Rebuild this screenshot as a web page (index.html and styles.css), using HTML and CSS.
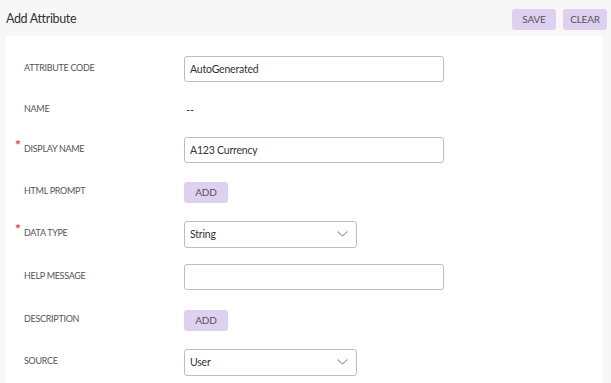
FILE: index.html
```html
<!DOCTYPE html>
<html lang="en">
<head>
  <meta charset="UTF-8" />
  <title>Add Attribute</title>
  <link rel="stylesheet" href="styles.css">
</head>
<body>
  <header class="page-head">
    <div class="page-title">Add Attribute</div>
    <div class="actions">
      <button class="btn">SAVE</button>
      <button class="btn">CLEAR</button>
    </div>
  </header>

  <div class="card">
    <div class="row">
      <label class="label">ATTRIBUTE CODE</label>
      <input class="field" type="text" value="AutoGenerated" />
    </div>
    <div class="row row-short">
      <label class="label">NAME</label>
      <span class="value">--</span>
    </div>
    <div class="row">
      <label class="label required">DISPLAY NAME</label>
      <input class="field" type="text" value="A123 Currency" />
    </div>
    <div class="row">
      <label class="label">HTML PROMPT</label>
      <button class="btn btn-add">ADD</button>
    </div>
    <div class="row">
      <label class="label required">DATA TYPE</label>
      <div class="select">
        <span>String</span>
        <svg class="chevron" width="11" height="6" viewBox="0 0 11 6"><path d="M0.5 0.5 L5.5 5 L10.5 0.5" fill="none" stroke="#a5a5a5" stroke-width="1.1"/></svg>
      </div>
    </div>
    <div class="row row-tall">
      <label class="label">HELP MESSAGE</label>
      <input class="field" type="text" value="" />
    </div>
    <div class="row">
      <label class="label">DESCRIPTION</label>
      <button class="btn btn-add">ADD</button>
    </div>
    <div class="row">
      <label class="label">SOURCE</label>
      <div class="select">
        <span>User</span>
        <svg class="chevron" width="11" height="6" viewBox="0 0 11 6"><path d="M0.5 0.5 L5.5 5 L10.5 0.5" fill="none" stroke="#a5a5a5" stroke-width="1.1"/></svg>
      </div>
    </div>
  </div>
</body>
</html>
```

FILE: styles.css
```css
body {
  margin: 0;
  background: #f7f7f7;
  font-family: 'Lato', 'Noto Sans', sans-serif;
  color: #333;
}

.page-head {
  height: 36px;
  display: flex;
  justify-content: space-between;
  align-items: center;
  padding: 0 4px 0 6px;
}

.page-title {
  font-size: 12.5px;
  letter-spacing: -0.35px;
  color: #333;
}

.actions {
  display: flex;
  gap: 7px;
  padding-top: 2px;
}

.btn {
  background: #ddd0f0;
  color: #555;
  border: none;
  border-radius: 3px;
  font-family: inherit;
  font-size: 10px;
  letter-spacing: -0.2px;
  height: 21px;
  width: 44px;
  padding: 0;
}

.card {
  background: #fff;
  margin: 0 8px 0 6px;
  padding-top: 12px;
}

.row {
  display: flex;
  align-items: center;
  height: 42px;
  padding-left: 18px;
}

.row-short {
  height: 39px;
}

.row-tall {
  height: 44px;
}

.label {
  width: 160px;
  flex-shrink: 0;
  font-size: 9px;
  letter-spacing: -0.3px;
  color: #555;
  position: relative;
  margin-top: -3px;
}

.required::before {
  content: "*";
  color: #e53935;
  font-size: 14px;
  font-weight: bold;
  position: absolute;
  left: -9px;
  top: -7px;
}

.value {
  font-size: 11px;
  color: #333;
  padding-left: 2px;
}

.field {
  width: 260px;
  height: 26px;
  box-sizing: border-box;
  border: 1px solid #bdbdbd;
  border-radius: 3px;
  padding: 0 5px;
  font-family: inherit;
  font-size: 10.5px;
  letter-spacing: -0.2px;
  color: #333;
}

.select {
  width: 173px;
  height: 27px;
  box-sizing: border-box;
  border: 1px solid #bdbdbd;
  border-radius: 3px;
  padding: 0 5px;
  display: flex;
  align-items: center;
  justify-content: space-between;
  font-size: 10.5px;
  letter-spacing: -0.2px;
  color: #333;
}

.chevron {
  margin-right: 3px;
}
```
